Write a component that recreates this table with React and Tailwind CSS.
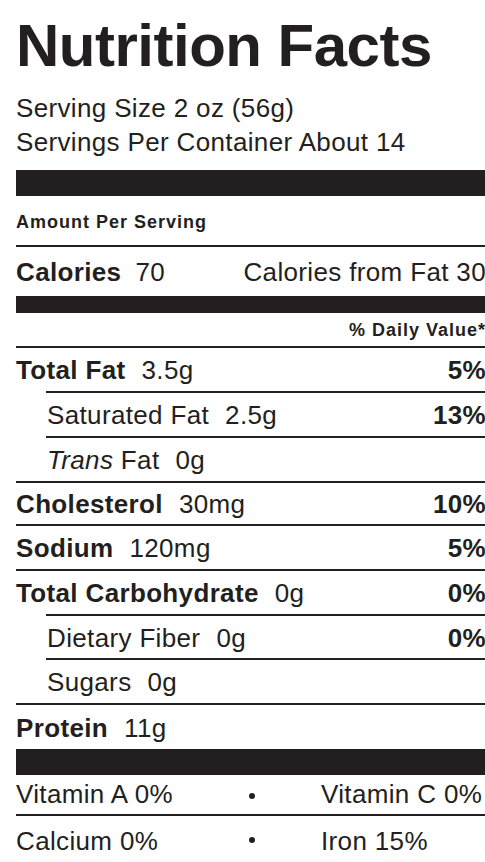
import React from "react";

const nutrients = [
  { label: "Total Fat", amount: "3.5g", dv: "5%", bold: true, h: "h-[45px]", lineIndent: true },
  { label: "Saturated Fat", amount: "2.5g", dv: "13%", sub: true, h: "h-[45px]", lineIndent: true },
  { label: "Fat", italic: "Trans", amount: "0g", sub: true, h: "h-[45px]" },
  { label: "Cholesterol", amount: "30mg", dv: "10%", bold: true, h: "h-[43px]" },
  { label: "Sodium", amount: "120mg", dv: "5%", bold: true, h: "h-[45px]" },
  { label: "Total Carbohydrate", amount: "0g", dv: "0%", bold: true, h: "h-[45px]", lineIndent: true },
  { label: "Dietary Fiber", amount: "0g", dv: "0%", sub: true, h: "h-[44px]", lineIndent: true },
  { label: "Sugars", amount: "0g", sub: true, h: "h-[45px]" },
  { label: "Protein", amount: "11g", bold: true, h: "h-[44px]", noLine: true },
];

function NutrientRow({ item }) {
  return (
    <div className={`${item.h} flex flex-col`}>
      <div
        className={`flex-1 flex items-center justify-between pt-[2px] ${
          item.sub ? "pl-[31px]" : ""
        }`}
      >
        <span>
          {item.italic && <em className="italic">{item.italic} </em>}
          <span className={item.bold ? "font-bold" : ""}>{item.label}</span>
          <span className="ml-[16px]">{item.amount}</span>
        </span>
        {item.dv && <span className="font-bold">{item.dv}</span>}
      </div>
      {!item.noLine && (
        <div className={`h-[2px] bg-[#231f20] ${item.lineIndent ? "ml-[30px]" : ""}`} />
      )}
    </div>
  );
}

function VitaminRow({ left, right, h, pt, dot }) {
  return (
    <div className={`${h} flex flex-col`}>
      <div className={`flex-1 flex items-center ${pt}`}>
        <span className="w-[233px]">{left}</span>
        <span className={`w-[6px] h-[6px] rounded-full bg-[#231f20] ${dot}`} />
        <span className="ml-[66px]">{right}</span>
      </div>
      <div className="h-[2px] bg-[#231f20]" />
    </div>
  );
}

export default function App() {
  return (
    <div className="w-[485px] h-[862px] overflow-hidden bg-white text-[#231f20] font-['Liberation_Sans',Arial,Helvetica,sans-serif]">
      <div className="ml-4 w-[470px]">
        <h1 className="pt-4 text-[60px] leading-none font-bold tracking-[-0.5px]">
          Nutrition Facts
        </h1>
        <div className="mt-[15px] text-[26px] leading-[34px] tracking-[0.35px]">
          <p>Serving Size 2 oz (56g)</p>
          <p>Servings Per Container About 14</p>
        </div>

        <div className="mt-[11px] h-[26px] bg-[#231f20]" />

        <div className="h-[51px] flex flex-col">
          <div className="flex-1 flex items-center pt-[3px] text-[18px] font-bold tracking-[1px]">
            Amount Per Serving
          </div>
          <div className="h-[2px] bg-[#231f20]" />
        </div>

        <div className="h-[49px] flex items-center justify-between pt-[1px] text-[26px] tracking-[0.35px]">
          <span>
            <span className="font-bold">Calories</span>
            <span className="ml-[14px]">70</span>
          </span>
          <span>Calories from Fat 30</span>
        </div>

        <div className="h-[17px] bg-[#231f20]" />

        <div className="h-[35px] flex flex-col">
          <div className="flex-1 flex items-center justify-end pt-[1px] text-[18px] font-bold tracking-[1px]">
            % Daily Value*
          </div>
          <div className="h-[2px] bg-[#231f20]" />
        </div>

        <div className="text-[26px] tracking-[0.35px]">
          {nutrients.map((item) => (
            <NutrientRow key={item.label + (item.italic || "")} item={item} />
          ))}
        </div>

        <div className="h-[26px] bg-[#231f20]" />

        <div className="text-[26px] tracking-[0.35px]">
          <VitaminRow left="Vitamin A 0%" right="Vitamin C 0%" h="h-[41px]" pt="pt-0" dot="mt-[2px]" />
          <VitaminRow left="Calcium 0%" right="Iron 15%" h="h-[44px]" pt="pt-[6px]" dot="-mt-[4px]" />
        </div>
      </div>
    </div>
  );
}
